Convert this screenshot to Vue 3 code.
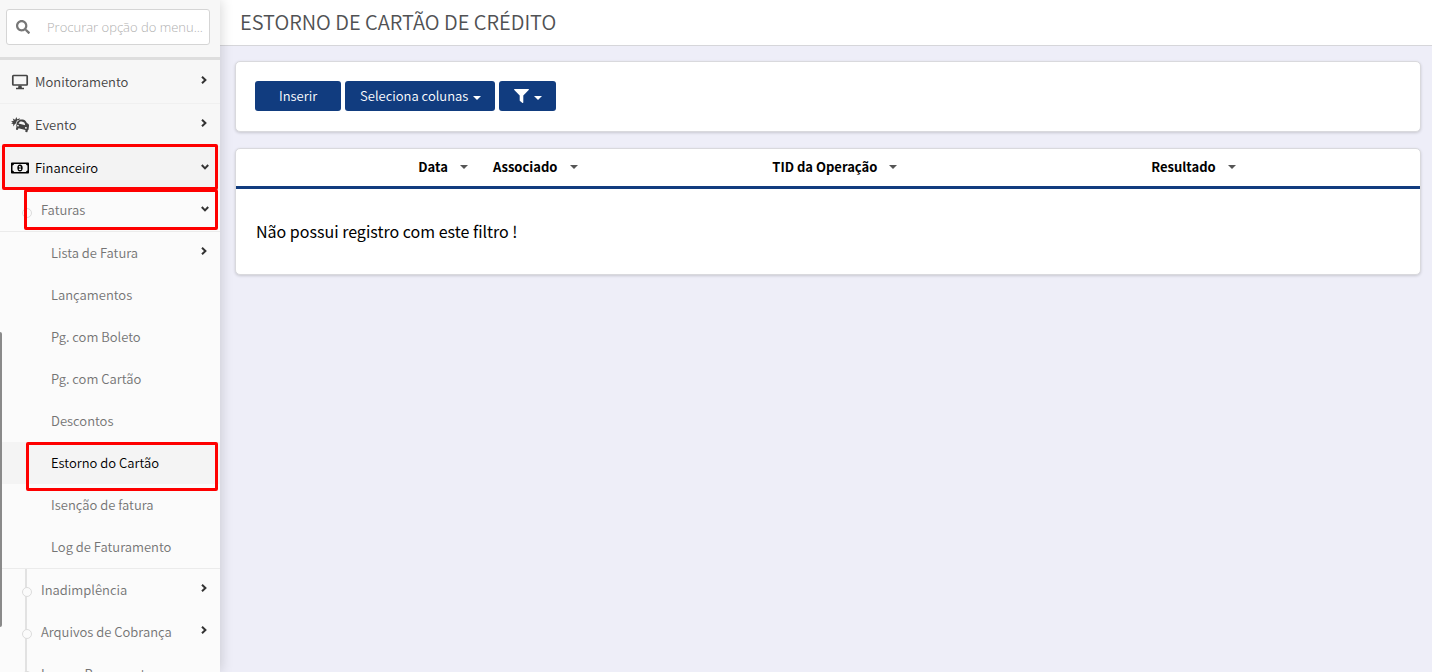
<script setup>
import { ref } from 'vue'

const search = ref('')

const topItems = [
  { label: 'Monitoramento', icon: 'monitor' },
  { label: 'Evento', icon: 'crash' },
]

const invoiceItems = [
  { label: 'Lista de Fatura', expandable: true },
  { label: 'Lançamentos' },
  { label: 'Pg. com Boleto' },
  { label: 'Pg. com Cartão' },
  { label: 'Descontos' },
  { label: 'Estorno do Cartão', current: true },
  { label: 'Isenção de fatura' },
  { label: 'Log de Faturamento' },
]

const financeItems = [
  { label: 'Inadimplência', expandable: true },
  { label: 'Arquivos de Cobrança', expandable: true },
  { label: 'Lançar Pagamento' },
]

const columns = ['Data', 'Associado', 'TID da Operação', 'Resultado']
</script>

<template>
  <div class="page">
    <aside class="sidebar">
      <div class="search">
        <label class="search-box">
          <svg class="search-icon" viewBox="0 0 512 512" aria-hidden="true">
            <path d="M505 442.700 405.300 343c-4.500-4.500-10.600-7-17-7H372c27.600-35.300 44-79.700 44-128C416 93.100 322.900 0 208 0S0 93.100 0 208s93.100 208 208 208c48.300 0 92.700-16.400 128-44v16.300c0 6.400 2.500 12.500 7 17l99.700 99.700c9.400 9.400 24.600 9.400 33.900 0l28.300-28.300c9.400-9.400 9.400-24.600.1-34zM208 336c-70.700 0-128-57.200-128-128 0-70.700 57.200-128 128-128 70.700 0 128 57.200 128 128 0 70.700-57.200 128-128 128z" />
          </svg>
          <input v-model="search" type="text" aria-label="Procurar opção do menu" placeholder="Procurar opção do menu..." />
        </label>
      </div>

      <nav class="menu">
        <ul>
          <li v-for="item in topItems" :key="item.label">
            <a href="#" class="row top">
              <svg v-if="item.icon === 'monitor'" class="icon" viewBox="0 0 18 16" aria-hidden="true">
                <path d="M2.500 1.500h13q.7 0 .7.700v8.100q0 .7-.7.700h-13q-.7 0-.7-.7V2.200q0-.7.700-.7z" fill="none" stroke="currentColor" stroke-width="1.700" />
                <path d="M7.500 11.500h3l.4 2.200h2.100V15.200H5v-1.500h2.100z" />
              </svg>
              <svg v-else class="icon" viewBox="0 0 18 16" aria-hidden="true">
                <path d="M0 4.200 2.600 4 1.800 1.500 4.200 2.800 5.300 0l1 2.300L9 1.200 8.300 3 6 3.600 4.800 6.600l-1.300.8L2.400 9.600 2.200 7 .1 6.500 1.800 5.400z" />
                <path fill-rule="evenodd" d="M8.400 3c2-.8 4.700-.4 6.200.9l1.500 2.300c1.400.5 2.100 1.500 1.900 2.900l-.5 3.600-.7.500-.3 1.500c-.2.900-2.200.6-2.200-.4l.2-1.200-7-1.900-.5 1.300c-.4.900-2.200.3-2-.7l.5-2-.3-.8.5-3C5.800 5.200 6.900 4 8.400 3zM8.900 4.700 7.500 6.500l6.700 1.700-.6-2.100c-1.100-1.300-3.200-1.800-4.700-1.400zM6.800 7.800c-1 .3-.9 1.600.2 1.700 1.200.1 1.400-1.300-.2-1.700zm8.200 2.200c-1.300 0-1.300 1.600-.2 1.800 1.200.1 1.500-1.500.2-1.800z" />
              </svg>
              <span>{{ item.label }}</span>
              <svg class="chevron" viewBox="0 0 6 8" aria-hidden="true"><path d="M1 .8 4.400 4 1 7.200" /></svg>
            </a>
          </li>
          <li>
            <a href="#" class="row top open">
              <svg class="icon" viewBox="0 0 18 16" aria-hidden="true">
                <path fill-rule="evenodd" d="M.8 2.500h16.400q.8 0 .8.800v9.400q0 .8-.8.800H.8q-.8 0-.8-.8V3.300q0-.8.800-.8zM3 4Q2.900 5.400 1.500 5.500v5q1.400.1 1.500 1.500h12q.1-1.400 1.500-1.500v-5Q15.100 5.400 15 4z" />
                <path fill-rule="evenodd" d="M9 4.600c1.700 0 2.700 1.500 2.700 3.400S10.700 11.400 9 11.400 6.300 9.900 6.300 8 7.300 4.600 9 4.600zM7.900 7l.6-.1v2.200H7.900v.9h2.200v-.9H9.600V5.900H8.700L7.900 6.300z" />
              </svg>
              <span>Financeiro</span>
              <svg class="chevron down" viewBox="0 0 8 6" aria-hidden="true"><path d="M.8 1 4 4.400 7.200 1" /></svg>
              <i class="mark mark-finance"></i>
            </a>
            <ul class="sub">
              <li>
                <a href="#" class="row second group">
                  <span>Faturas</span>
                  <svg class="chevron down" viewBox="0 0 8 6" aria-hidden="true"><path d="M.8 1 4 4.400 7.200 1" /></svg>
                  <i class="mark mark-invoices"></i>
                </a>
                <ul class="leaves">
                  <li v-for="item in invoiceItems" :key="item.label">
                    <a href="#" class="row third" :class="{ current: item.current }">
                      <span>{{ item.label }}</span>
                      <svg v-if="item.expandable" class="chevron" viewBox="0 0 6 8" aria-hidden="true"><path d="M1 .8 4.400 4 1 7.200" /></svg>
                      <i v-if="item.current" class="mark mark-refund"></i>
                    </a>
                  </li>
                </ul>
              </li>
              <li v-for="item in financeItems" :key="item.label">
                <a href="#" class="row second line">
                  <span>{{ item.label }}</span>
                  <svg v-if="item.expandable" class="chevron" viewBox="0 0 6 8" aria-hidden="true"><path d="M1 .8 4.400 4 1 7.200" /></svg>
                </a>
              </li>
            </ul>
          </li>
        </ul>
      </nav>
      <div class="thumb"></div>
    </aside>

    <main class="content">
      <header class="title-bar">
        <h1>ESTORNO DE CARTÃO DE CRÉDITO</h1>
      </header>
      <div class="body">
        <section class="card toolbar">
          <button type="button" class="btn insert">Inserir</button>
          <button type="button" class="btn">Seleciona colunas<i class="caret"></i></button>
          <button type="button" class="btn" aria-label="Filtro">
            <svg class="funnel" viewBox="0 0 15 14" aria-hidden="true"><path d="M.6 0h13.800q.9.300.3 1L9.300 6.500v7q-.1.700-.8.400L6 12q-.3-.3-.3-.7V6.500L.3 1Q-.3.300.6 0z" /></svg><i class="caret"></i>
          </button>
        </section>

        <section class="card">
          <table>
            <thead>
              <tr>
                <td class="select"></td>
                <th v-for="(name, i) in columns" :key="name" scope="col" :class="'c' + i">
                  <div class="head">
                    {{ name }}<button type="button" class="sort" :aria-label="'Opções de ' + name"><i class="caret"></i></button>
                  </div>
                </th>
              </tr>
            </thead>
            <tbody>
              <tr>
                <td colspan="5" class="empty">Não possui registro com este filtro !</td>
              </tr>
            </tbody>
          </table>
        </section>
      </div>
    </main>
  </div>
</template>

<style>
body {
  background: #eeeef8;
}
</style>

<style scoped>
* {
  box-sizing: border-box;
}

.page {
  display: flex;
  height: 100vh;
  overflow: hidden;
  font-family: "Noto Sans CJK SC", "Noto Sans", sans-serif;
  font-size: 13px;
  font-weight: 350;
  line-height: 20px;
}

.sidebar {
  position: relative;
  z-index: 1;
  flex: 0 0 220px;
  min-width: 0;
  background: #fbfbfb;
  box-shadow: 1px 0 12px rgba(0, 0, 0, 0.16);
}

.search {
  padding: 9px 10px 12px 6px;
  background: #f7f7f7;
  border-bottom: 3px solid #dedede;
}

.search-box {
  display: flex;
  align-items: center;
  height: 36px;
  padding-left: 9px;
  background: #fff;
  border: 1px solid #d5d5d5;
  border-radius: 3px;
}

.search-icon {
  flex: none;
  width: 14px;
  height: 14px;
  fill: #777;
}

.search-box input {
  flex: 1;
  min-width: 0;
  padding: 0 0 0 17px;
  border: 0;
  outline: 0;
  background: transparent;
  font-family: "Open Sans", "Noto Sans", sans-serif;
  font-size: 13px;
  font-weight: 300;
}

.search-box input::placeholder {
  color: #b0b0b0;
  opacity: 1;
}

.menu {
  padding-top: 1px;
  background: #f7f7f7;
}

ul {
  margin: 0;
  padding: 0;
  list-style: none;
}

.row {
  position: relative;
  display: flex;
  align-items: center;
  height: 42px;
  padding-right: 12px;
  color: #747474;
  text-decoration: none;
  white-space: nowrap;
}

.row span {
  flex: 1;
}

.row.top {
  height: 43px;
  padding-left: 11px;
  border-bottom: 1px solid #f0f0f0;
  color: #444;
}

.row.top.open {
  background: #f3f3f3;
  color: #000;
}

.sub {
  background: #fbfbfb;
}

.row.second {
  padding-left: 41px;
}

.row.group {
  padding-bottom: 2px;
  border-bottom: 1px solid #ebebeb;
}

.row.third {
  padding-left: 51px;
}

.row.current {
  background: #f4f4f4;
  color: #000;
}

.leaves {
  border-bottom: 1px solid #ebebeb;
}

.row.line::before {
  content: "";
  position: absolute;
  left: 25px;
  top: 0;
  bottom: 0;
  width: 2px;
  background: #e2e2e2;
}

.row.second::after {
  content: "";
  position: absolute;
  left: 22px;
  top: 18px;
  width: 8px;
  height: 8px;
  background: #fbfbfb;
  border: 1px solid #dcdcdc;
  border-radius: 50%;
}

.icon {
  flex: none;
  width: 18px;
  height: 16px;
  margin-right: 6px;
  fill: currentColor;
}

.chevron {
  width: 6px;
  height: 8px;
  margin: 0 1px 4px 0;
  fill: none;
  stroke: #333;
  stroke-width: 2;
}

.chevron.down {
  width: 8px;
  height: 6px;
  margin: 0 -1px 2px 0;
}

.mark {
  position: absolute;
  z-index: 2;
  right: 2px;
  border: 3px solid #fe0000;
  border-radius: 2px;
}

.mark-finance {
  left: 2px;
  top: -3px;
  height: 46px;
}

.mark-invoices {
  left: 24px;
  top: -1px;
  height: 41px;
}

.mark-refund {
  left: 26px;
  top: 0;
  height: 49px;
}

.thumb {
  position: absolute;
  left: 0;
  top: 332px;
  width: 2px;
  height: 295px;
  background: #8a8a8a;
  border-radius: 0 2px 2px 0;
}

.content {
  flex: 1;
  min-width: 0;
}

.title-bar {
  height: 46px;
  padding: 7px 20px;
  background: #fff;
  border-bottom: 1px solid #d6d6da;
}

h1 {
  margin: 0;
  color: #505153;
  font-size: 20px;
  font-weight: 350;
  line-height: 30px;
}

.body {
  display: flex;
  flex-direction: column;
  gap: 16px;
  padding: 15px 11px 0 15px;
}

.card {
  background: #fff;
  border: 1px solid #d9d9dd;
  border-radius: 5px;
  box-shadow: 0 1px 3px rgba(0, 0, 0, 0.16);
}

.toolbar {
  display: flex;
  gap: 4px;
  padding: 19px 19px 20px;
}

.btn {
  display: flex;
  align-items: center;
  height: 30px;
  padding: 0 14px 1px 15px;
  background: #113c7f;
  border: 0;
  border-radius: 3px;
  color: #fff;
  font-family: inherit;
  font-size: 13px;
  font-weight: 350;
}

.btn.insert {
  padding: 0 24px 1px;
}

.caret {
  display: inline-block;
  border: 4px solid transparent;
  border-top-color: currentColor;
  border-bottom: 0;
}

.btn .caret {
  margin: 4px 0 0 5px;
}

.funnel {
  width: 15px;
  height: 14px;
  fill: #fff;
}

table {
  width: 100%;
  table-layout: fixed;
  border-collapse: separate;
  border-spacing: 0;
}

thead td,
th {
  height: 40px;
  padding: 0 0 2px;
  border-bottom: 3px solid #113c7f;
  color: #000;
  font-weight: 700;
  text-align: left;
  white-space: nowrap;
}

.head {
  display: flex;
  align-items: center;
}

.select {
  width: 15.4%;
}

.c0 {
  width: 6.3%;
}

.c1 {
  width: 23.6%;
}

.c2 {
  width: 32%;
}

.sort {
  display: flex;
  align-items: center;
  height: 16px;
  padding: 0 0 0 12px;
  background: none;
  border: 0;
  color: #555;
}

.empty {
  height: 85px;
  padding: 0 20px 2px;
  font-size: 16px;
  font-weight: 400;
}
</style>
